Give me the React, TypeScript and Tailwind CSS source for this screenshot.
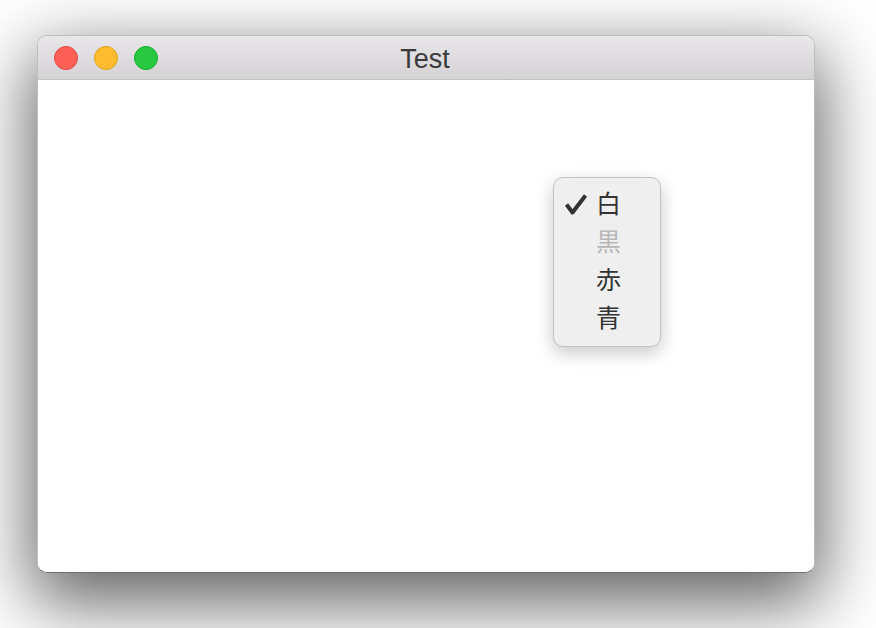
const items = [
  { label: "白", checked: true, disabled: false },
  { label: "黒", checked: false, disabled: true },
  { label: "赤", checked: false, disabled: false },
  { label: "青", checked: false, disabled: false },
];

const Check = () => (
  <svg width="24" height="22" viewBox="0 0 24 22" className="block">
    <path d="M2.5 10.5 L8.5 18.5 L21.5 1.5" fill="none" stroke="#333333" strokeWidth="4" strokeLinejoin="round" />
  </svg>
);

export default function App() {
  return (
    <div className="h-[628px] w-[876px] overflow-hidden bg-white pl-[37px] pt-[35px]">
      <div className="relative flex h-[538px] w-[778px] flex-col overflow-hidden rounded-[10px] border border-[#bdbdbd] border-b-[#6f6f6f] bg-white shadow-[0_24px_70px_6px_rgba(0,0,0,0.62)]">
        <div className="relative flex h-[44px] shrink-0 items-center border-b border-[#c4c3c4] bg-gradient-to-b from-[#e9e7e9] to-[#d4d2d4] pl-[16px]">
          <div className="flex gap-[16px]">
            <span className="size-[24px] rounded-full border border-[#e2463f] bg-[#fe5f57]" />
            <span className="size-[24px] rounded-full border border-[#e1a116] bg-[#febc2e]" />
            <span className="size-[24px] rounded-full border border-[#12ac28] bg-[#28c840]" />
          </div>
          <div className="absolute inset-x-0 top-0 flex h-full items-center justify-center pointer-events-none">
            <span className="mr-[2px] mt-[4px] font-['Liberation_Sans',Arial,sans-serif] text-[27px] leading-none text-[#3a3a3a]">
              Test
            </span>
          </div>
        </div>
        <div className="flex-1 bg-white" />
        <div className="absolute left-[515px] top-[141px] w-[108px] rounded-[10px] border border-[#c3c3c3] bg-[#efefef] py-[8px] shadow-[0_6px_18px_rgba(0,0,0,0.22)]">
          {items.map((it) => (
            <div key={it.label} className="flex h-[38px] items-center">
              <div className="flex w-[42px] justify-end pr-[8px]">{it.checked && <Check />}</div>
              <span
                className={
                  "-mt-[5px] font-['Noto_Sans_CJK_JP',sans-serif] text-[25px] leading-none " +
                  (it.disabled ? "text-[#b8b8b8]" : "text-[#333333]")
                }
              >
                {it.label}
              </span>
            </div>
          ))}
        </div>
      </div>
    </div>
  );
}
